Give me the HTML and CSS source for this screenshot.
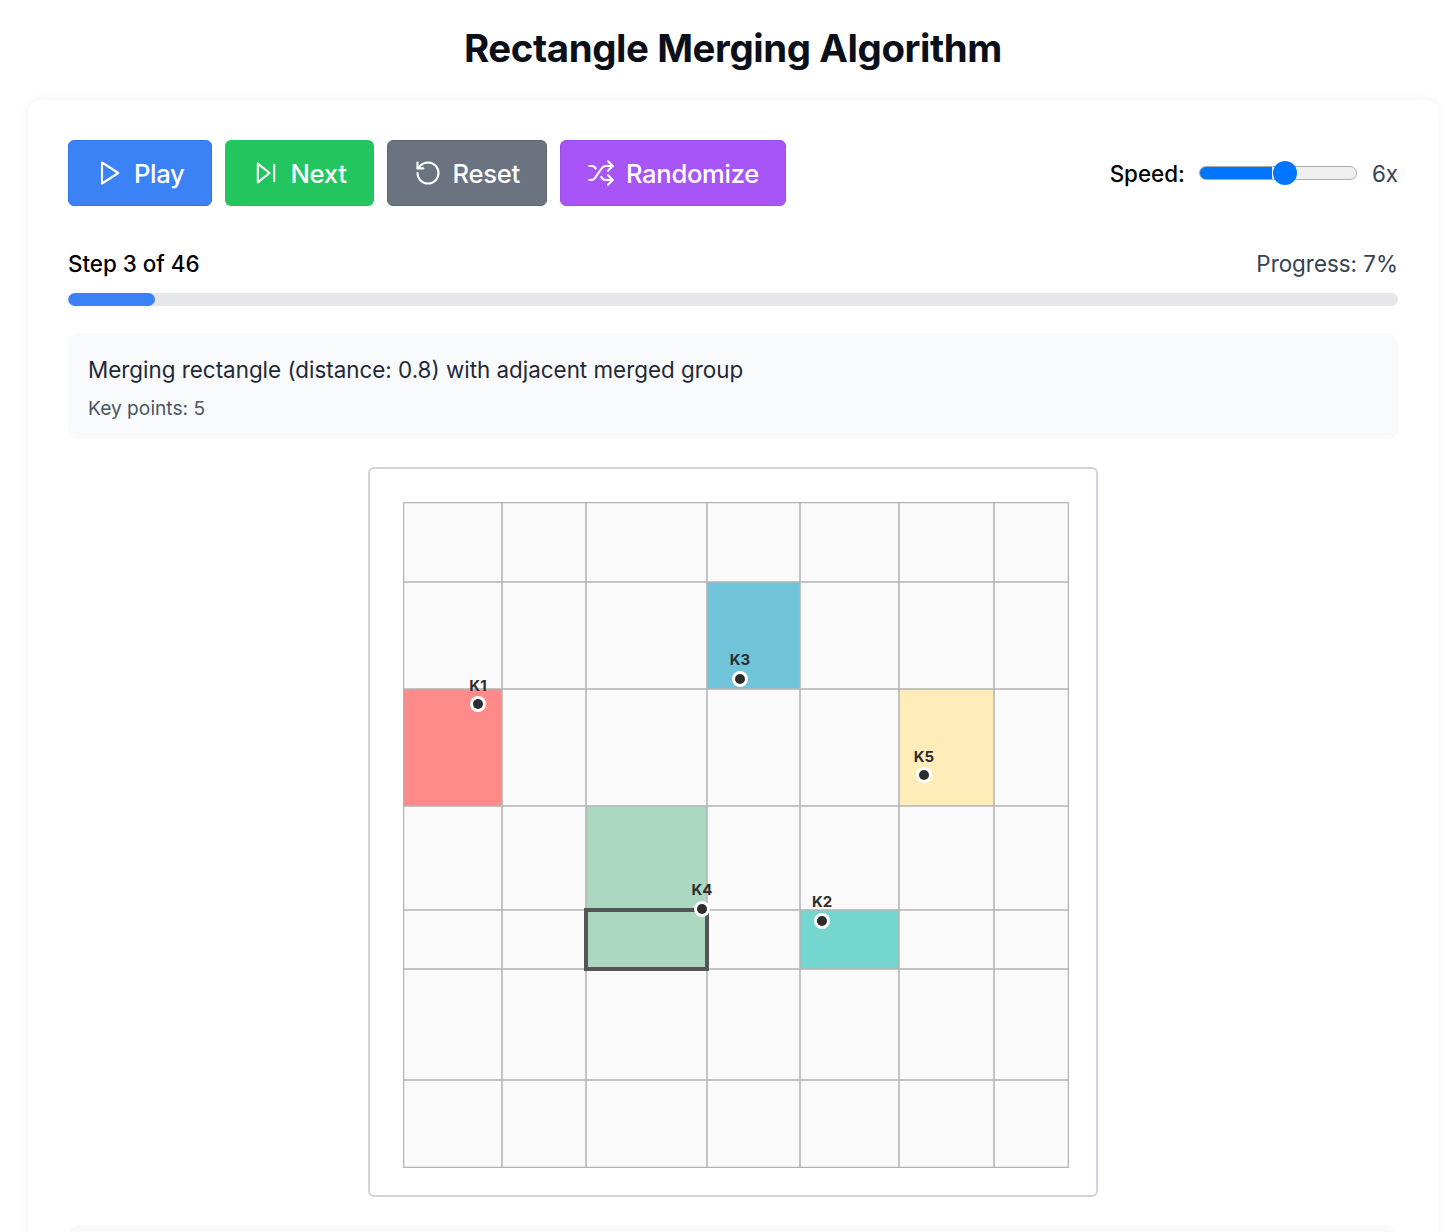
FILE: index.html
```html
<!DOCTYPE html>
<html lang="en">
<head>
<meta charset="utf-8">
<title>Rectangle Merging Algorithm</title>
<link rel="stylesheet" href="styles.css">
</head>
<body>
<h1 class="title">Rectangle Merging Algorithm</h1>
<main class="card">
  <div class="toolbar">
    <div class="buttons">
      <button class="btn btn-blue"><svg class="icon" viewBox="0 0 24 24"><polygon points="6 3 20 12 6 21 6 3"/></svg>Play</button>
      <button class="btn btn-green"><svg class="icon" viewBox="0 0 24 24"><polygon points="5 4 15 12 5 20 5 4"/><line x1="19" y1="5" x2="19" y2="19"/></svg>Next</button>
      <button class="btn btn-gray"><svg class="icon" viewBox="0 0 24 24"><path d="M3 12a9 9 0 1 0 9-9 9.75 9.75 0 0 0-6.74 2.74L3 8"/><path d="M3 3v5h5"/></svg>Reset</button>
      <button class="btn btn-purple"><svg class="icon" viewBox="0 0 24 24"><path d="M2 18h1.4c1.3 0 2.5-.6 3.3-1.7l6.1-8.6c.7-1.1 2-1.7 3.3-1.7H22"/><path d="m18 2 4 4-4 4"/><path d="M2 6h1.9c1.5 0 2.9.9 3.6 2.2"/><path d="M22 18h-5.9c-1.3 0-2.6-.7-3.3-1.8l-.5-.8"/><path d="m18 14 4 4-4 4"/></svg>Randomize</button>
    </div>
    <div class="speed">
      <label class="speed-label" for="speed">Speed:</label>
      <input class="slider" id="speed" type="range" min="1" max="10" value="6">
      <span class="speed-value">6x</span>
    </div>
  </div>

  <div class="progress-head">
    <span class="step">Step 3 of 46</span>
    <span class="percent">Progress: 7%</span>
  </div>
  <div class="track"><div class="fill" style="width:6.52%"></div></div>

  <section class="status">
    <p class="status-main">Merging rectangle (distance: 0.8) with adjacent merged group</p>
    <p class="status-sub">Key points: 5</p>
  </section>

  <div class="diagram">
    <svg class="canvas" viewBox="402 500 666 666" width="666" height="666">
      <rect class="bg" x="402.5" y="500.5" width="665" height="665"/>
      <rect x="402" y="687" width="99" height="117" fill="#ff8a8a"/>
      <rect x="706" y="580" width="93" height="107" fill="#70c4da"/>
      <rect x="898" y="687" width="95" height="117" fill="#ffecb9"/>
      <rect x="585" y="804" width="121" height="163" fill="#acd8c1"/>
      <rect x="799" y="908" width="99" height="59" fill="#75d6d0"/>
      <g class="grid">
        <path d="M402.5 500.5V1165.5M501 500.5V1165.5M585 500.5V1165.5M706 500.5V1165.5M799 500.5V1165.5M898 500.5V1165.5M993 500.5V1165.5M1067.5 500.5V1165.5"/>
        <path d="M402.5 500.5H1067.5M402.5 580H1067.5M402.5 687H1067.5M402.5 804H1067.5M402.5 908H1067.5M402.5 967H1067.5M402.5 1078H1067.5M402.5 1165.5H1067.5"/>
      </g>
      <rect class="highlight" x="585" y="908" width="121" height="59"/>
      <g class="point"><circle class="ring" cx="477" cy="702" r="8"/><circle class="dot" cx="477" cy="702" r="5"/><text x="477" y="689">K1</text></g>
      <g class="point"><circle class="ring" cx="739" cy="677" r="8"/><circle class="dot" cx="739" cy="677" r="5"/><text x="739" y="663">K3</text></g>
      <g class="point"><circle class="ring" cx="923" cy="773" r="8"/><circle class="dot" cx="923" cy="773" r="5"/><text x="923" y="760">K5</text></g>
      <g class="point"><circle class="ring" cx="701" cy="907" r="8"/><circle class="dot" cx="701" cy="907" r="5"/><text x="701" y="893">K4</text></g>
      <g class="point"><circle class="ring" cx="821" cy="919" r="8"/><circle class="dot" cx="821" cy="919" r="5"/><text x="821" y="905">K2</text></g>
    </svg>
  </div>

  <section class="next-panel"></section>
</main>
</body>
</html>
```

FILE: styles.css
```css
* { box-sizing: border-box; }
html, body { height: 1232px; overflow: hidden; }
body {
  margin: 0;
  padding: 0 18px 0 28px;
  background: #fff;
  font-family: Inter, "Liberation Sans", sans-serif;
  color: #000;
}
.title {
  margin: 0;
  padding-top: 24px;
  height: 100px;
  font-size: 38.4px;
  line-height: 48px;
  font-weight: 700;
  letter-spacing: -0.4px;
  text-align: center;
  color: #0b0f19;
}
.card {
  height: 1300px;
  padding: 40px;
  border-radius: 12px;
  background: #fff;
  box-shadow: 0 0 12px rgba(0, 0, 0, 0.05);
}
.toolbar {
  display: flex;
  align-items: center;
  justify-content: space-between;
  height: 66px;
}
.buttons { display: flex; gap: 13px; }
.btn {
  display: flex;
  align-items: center;
  gap: 11px;
  height: 66px;
  padding: 0 26px;
  border: 1px solid transparent;
  border-radius: 6px;
  font-family: inherit;
  font-size: 25.6px;
  font-weight: 500;
  letter-spacing: -0.3px;
  color: #fff;
}
.btn-blue { background: #3b82f6; border-color: #2f76ee; }
.btn-green { background: #22c55e; }
.btn-gray { background: #6b7280; border-color: #5f6673; }
.btn-purple { background: #a855f7; border-color: #9d4cf0; }
.icon {
  width: 28px;
  height: 28px;
  flex: none;
  fill: none;
  stroke: #fff;
  stroke-width: 1.8;
  stroke-linecap: round;
  stroke-linejoin: round;
}
.speed { display: flex; align-items: center; }
.speed-label { font-size: 22.4px; font-weight: 500; margin-right: 14px; }
.slider {
  appearance: none;
  -webkit-appearance: none;
  width: 158px;
  height: 14px;
  margin: 0 15px 0 0;
  border: 1px solid #adadad;
  border-radius: 7px;
  background: linear-gradient(to right, #0075ff 0 72px, #efefef 72px);
}
.slider::-webkit-slider-thumb {
  -webkit-appearance: none;
  width: 24px;
  height: 24px;
  border-radius: 50%;
  background: #0075ff;
}
.speed-value { font-size: 22.4px; color: #374151; }
.progress-head {
  display: flex;
  justify-content: space-between;
  align-items: center;
  margin-top: 42px;
  height: 30px;
}
.step { font-size: 22.4px; font-weight: 500; }
.percent { font-size: 22.4px; color: #374151; }
.track {
  height: 13px;
  margin-top: 15px;
  border-radius: 7px;
  background: #e5e7eb;
  overflow: hidden;
}
.fill { height: 100%; border-radius: 7px; background: #3b82f6; }
.status {
  height: 106px;
  margin-top: 27px;
  padding: 20px;
  border-radius: 10px;
  background: #f9fafb;
}
.status-main { margin: 0; font-size: 22.4px; line-height: 34px; color: #1f2937; }
.status-sub { margin: 8px 0 0; font-size: 19.2px; line-height: 26px; color: #4b5563; }
.diagram {
  width: 730px;
  height: 730px;
  margin: 28px auto 0;
  padding: 33px;
  border: 2px solid #d1d5db;
  border-radius: 6px;
}
.canvas { display: block; }
.bg { fill: #fafafa; }
.grid path { fill: none; stroke: #b3b3b3; stroke-width: 1.5; }
.highlight { fill: none; stroke: #555; stroke-width: 4; }
.ring { fill: #fff; }
.dot { fill: #2d2d2d; }
.point text {
  font-family: Inter, "Liberation Sans", sans-serif;
  font-size: 15px;
  font-weight: 700;
  fill: #2d2d2d;
  text-anchor: middle;
}
.next-panel {
  height: 200px;
  margin-top: 28px;
  border-radius: 12px;
  background: #f9fafb;
}
```
